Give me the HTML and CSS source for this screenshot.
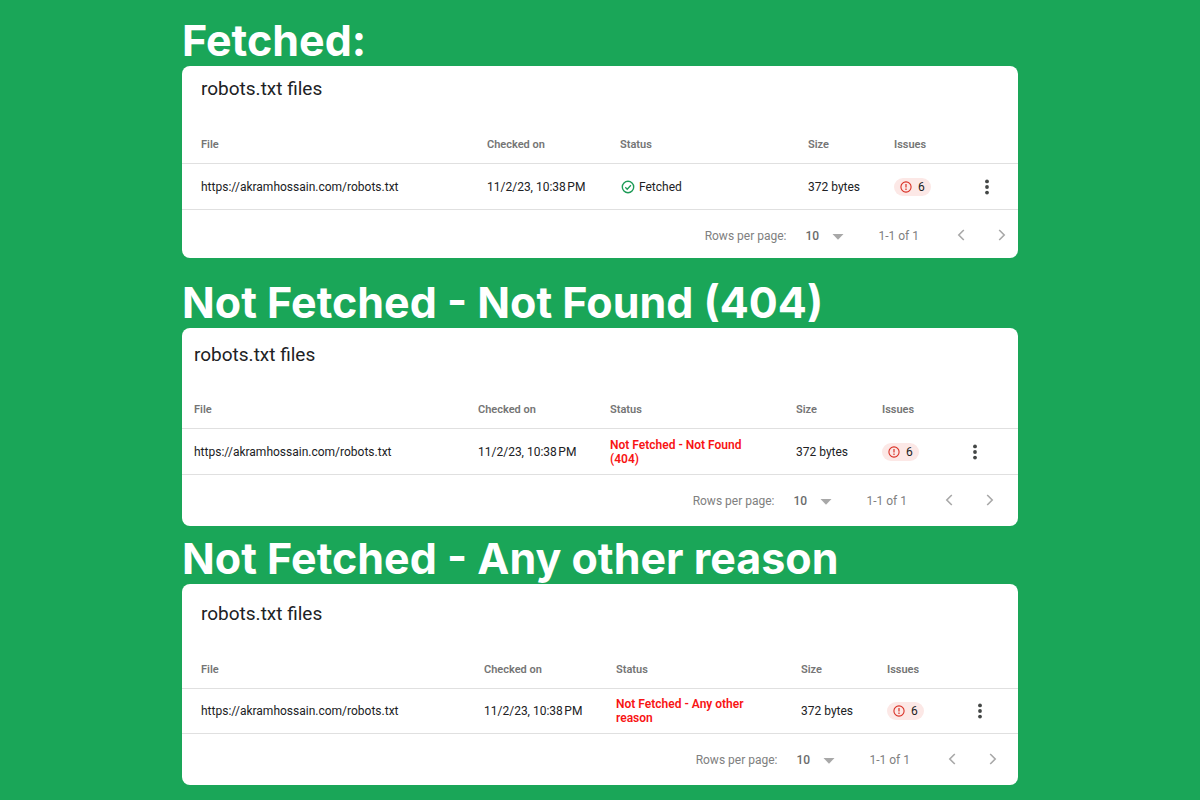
FILE: index.html
```
<!DOCTYPE html>
<html lang="en">
<head>
    <meta charset="UTF-8">
    <meta name="viewport" content="width=device-width, initial-scale=1.0">
    <title>robots.txt status</title>
    <link rel="stylesheet" href="styles.css">
</head>
<body>

    <!-- Shared icons -->
    <svg class="icon-defs" aria-hidden="true">
        <symbol id="icon-check" viewBox="0 0 14 14">
            <circle cx="7" cy="7" r="5.7" fill="none" stroke="currentColor" stroke-width="1.4"/>
            <path d="M4.3 7.3l1.9 1.9 3.7-4" fill="none" stroke="currentColor" stroke-width="1.3"/>
        </symbol>
        <symbol id="icon-error" viewBox="0 0 12 12">
            <circle cx="6" cy="6" r="5.1" fill="none" stroke="currentColor" stroke-width="1.1"/>
            <path d="M6 3v3.6M6 7.6v1.3" stroke="currentColor" stroke-width="1.2"/>
        </symbol>
        <symbol id="icon-more" viewBox="0 0 6 16">
            <circle cx="3" cy="2.4" r="1.9" fill="currentColor"/>
            <circle cx="3" cy="8" r="1.9" fill="currentColor"/>
            <circle cx="3" cy="13.6" r="1.9" fill="currentColor"/>
        </symbol>
        <symbol id="icon-drop" viewBox="0 0 12 6">
            <path d="M0.5 0h11L6 5.8z" fill="currentColor"/>
        </symbol>
        <symbol id="icon-prev" viewBox="0 0 8 12">
            <path d="M6.8 1L1.8 6l5 5" fill="none" stroke="currentColor" stroke-width="1.6"/>
        </symbol>
        <symbol id="icon-next" viewBox="0 0 8 12">
            <path d="M1.2 1l5 5-5 5" fill="none" stroke="currentColor" stroke-width="1.6"/>
        </symbol>
    </svg>

    <main class="container">

        <section class="report fetched">
            <h1>Fetched:</h1>
            <div class="card">
                <h2>robots.txt files</h2>
                <table>
                    <thead>
                        <tr>
                            <th class="file">File</th>
                            <th class="checked">Checked on</th>
                            <th class="status">Status</th>
                            <th class="size">Size</th>
                            <th class="issues">Issues</th>
                            <th class="more"></th>
                        </tr>
                    </thead>
                    <tbody>
                        <tr>
                            <td class="file">https://akramhossain.com/robots.txt</td>
                            <td>11/2/23, 10:38&#8239;PM</td>
                            <td><span class="ok"><svg><use href="#icon-check"/></svg>Fetched</span></td>
                            <td>372 bytes</td>
                            <td><span class="badge"><svg><use href="#icon-error"/></svg>6</span></td>
                            <td><button class="more-btn" aria-label="More options"><svg><use href="#icon-more"/></svg></button></td>
                        </tr>
                    </tbody>
                </table>
                <div class="pager">
                    <label for="rows1">Rows per page:</label>
                    <div class="select">
                        <select id="rows1"><option>10</option></select>
                        <svg><use href="#icon-drop"/></svg>
                    </div>
                    <span class="range">1-1 of 1</span>
                    <button aria-label="Previous page"><svg><use href="#icon-prev"/></svg></button>
                    <button aria-label="Next page"><svg><use href="#icon-next"/></svg></button>
                </div>
            </div>
        </section>

        <section class="report not-found">
            <h1>Not Fetched - Not Found (404)</h1>
            <div class="card">
                <h2>robots.txt files</h2>
                <table>
                    <thead>
                        <tr>
                            <th class="file">File</th>
                            <th class="checked">Checked on</th>
                            <th class="status">Status</th>
                            <th class="size">Size</th>
                            <th class="issues">Issues</th>
                            <th class="more"></th>
                        </tr>
                    </thead>
                    <tbody>
                        <tr>
                            <td class="file">https://akramhossain.com/robots.txt</td>
                            <td>11/2/23, 10:38&#8239;PM</td>
                            <td><span class="failed">Not Fetched - Not Found (404)</span></td>
                            <td>372 bytes</td>
                            <td><span class="badge"><svg><use href="#icon-error"/></svg>6</span></td>
                            <td><button class="more-btn" aria-label="More options"><svg><use href="#icon-more"/></svg></button></td>
                        </tr>
                    </tbody>
                </table>
                <div class="pager">
                    <label for="rows2">Rows per page:</label>
                    <div class="select">
                        <select id="rows2"><option>10</option></select>
                        <svg><use href="#icon-drop"/></svg>
                    </div>
                    <span class="range">1-1 of 1</span>
                    <button aria-label="Previous page"><svg><use href="#icon-prev"/></svg></button>
                    <button aria-label="Next page"><svg><use href="#icon-next"/></svg></button>
                </div>
            </div>
        </section>

        <section class="report other">
            <h1>Not Fetched - Any other reason</h1>
            <div class="card">
                <h2>robots.txt files</h2>
                <table>
                    <thead>
                        <tr>
                            <th class="file">File</th>
                            <th class="checked">Checked on</th>
                            <th class="status">Status</th>
                            <th class="size">Size</th>
                            <th class="issues">Issues</th>
                            <th class="more"></th>
                        </tr>
                    </thead>
                    <tbody>
                        <tr>
                            <td class="file">https://akramhossain.com/robots.txt</td>
                            <td>11/2/23, 10:38&#8239;PM</td>
                            <td><span class="failed">Not Fetched - Any other reason</span></td>
                            <td>372 bytes</td>
                            <td><span class="badge"><svg><use href="#icon-error"/></svg>6</span></td>
                            <td><button class="more-btn" aria-label="More options"><svg><use href="#icon-more"/></svg></button></td>
                        </tr>
                    </tbody>
                </table>
                <div class="pager">
                    <label for="rows3">Rows per page:</label>
                    <div class="select">
                        <select id="rows3"><option>10</option></select>
                        <svg><use href="#icon-drop"/></svg>
                    </div>
                    <span class="range">1-1 of 1</span>
                    <button aria-label="Previous page"><svg><use href="#icon-prev"/></svg></button>
                    <button aria-label="Next page"><svg><use href="#icon-next"/></svg></button>
                </div>
            </div>
        </section>

    </main>

</body>
</html>
```
FILE: styles.css
```
* {
    box-sizing: border-box;
}

body {
    margin: 0;
    background-color: #1aa658;
    color: #202124;
    font-family: Roboto, Arial, sans-serif;
    font-size: 12px;
}

.icon-defs {
    display: none;
}

.container {
    max-width: 836px;
    margin: 0 auto;
    padding: 16px 0 15px;
}

h1 {
    margin: 0 0 2px;
    color: white;
    font-family: Inter, sans-serif;
    font-size: 43px;
    font-weight: 700;
    line-height: 48px;
}

.card {
    background-color: white;
    border-radius: 8px;
    overflow: hidden;
}

h2 {
    margin: 0 0 24px;
    padding-left: var(--side);
    font-size: 19px;
    font-weight: 400;
    line-height: 24px;
}

/* Each report has its own side padding and column sizes */
.fetched {
    --side: 19px;
    --file: 305px;
    --status: 188px;
    --pager: 4px;
}

.not-found {
    --side: 12px;
    --file: 296px;
    --status: 186px;
    --pager: 16px;
    margin-top: 20px;
}

.other {
    --side: 19px;
    --file: 302px;
    --status: 185px;
    --pager: 13px;
    margin-top: 8px;
}

.fetched .card {
    padding: 11px 0 10px;
}

.not-found .card {
    padding: 15px 0 13px;
}

.other .card {
    padding: 18px 0 13px;
}

/* Table */
table {
    width: 100%;
    border-collapse: collapse;
    table-layout: fixed;
}

th,
td {
    padding: 0;
    border-bottom: 1px solid #e0e0e0;
    text-align: left;
}

th {
    height: 38px;
    padding-top: 1px;
    color: #757575;
    font-size: 11px;
    font-weight: 600;
}

td {
    height: 46px;
}

.fetched td {
    padding-top: 1px;
}

.other td {
    height: 45px;
}

.file {
    width: var(--file);
    padding-left: var(--side);
}

.checked {
    width: 132px;
}

.fetched .checked {
    width: 133px;
}

.status {
    width: var(--status);
}

.size {
    width: 86px;
}

.issues {
    width: 84px;
}

.ok {
    display: flex;
    align-items: center;
    gap: 4px;
    padding-left: 1px;
}

.ok svg {
    width: 14px;
    height: 14px;
    color: #1e9b57;
}

.failed {
    display: block;
    max-width: 144px;
    color: #f81414;
    font-weight: 600;
    line-height: 14px;
}

.badge {
    display: inline-flex;
    align-items: center;
    gap: 6px;
    height: 18px;
    padding: 0 6px;
    border-radius: 9px;
    background-color: #fce8e6;
}

.badge svg {
    width: 12px;
    height: 12px;
    color: #d93025;
}

button {
    display: flex;
    align-items: center;
    justify-content: center;
    padding: 0;
    border: none;
    background: none;
    cursor: pointer;
}

.more-btn {
    width: 18px;
    height: 24px;
    color: #444746;
}

.more-btn svg {
    width: 6px;
    height: 16px;
}

/* Pagination */
.pager {
    display: flex;
    align-items: center;
    justify-content: flex-end;
    padding: 14px var(--pager) 0 0;
    color: #808080;
    line-height: 24px;
}

.pager button {
    width: 24px;
    height: 24px;
    padding-bottom: 2px;
    color: #a8a8a8;
}

.pager button + button {
    margin-left: 17px;
}

.pager button svg {
    width: 8px;
    height: 12px;
}

.select {
    position: relative;
    margin-left: 19px;
}

.select select {
    appearance: none;
    width: 39px;
    height: 24px;
    padding: 0;
    border: none;
    background: none;
    color: #6b6b6b;
    font: 500 12px Roboto, Arial, sans-serif;
}

.select svg {
    position: absolute;
    top: 10px;
    right: 0;
    width: 12px;
    height: 6px;
    color: #a8a8a8;
    pointer-events: none;
}

.range {
    margin: 0 30px 0 34px;
}
```
